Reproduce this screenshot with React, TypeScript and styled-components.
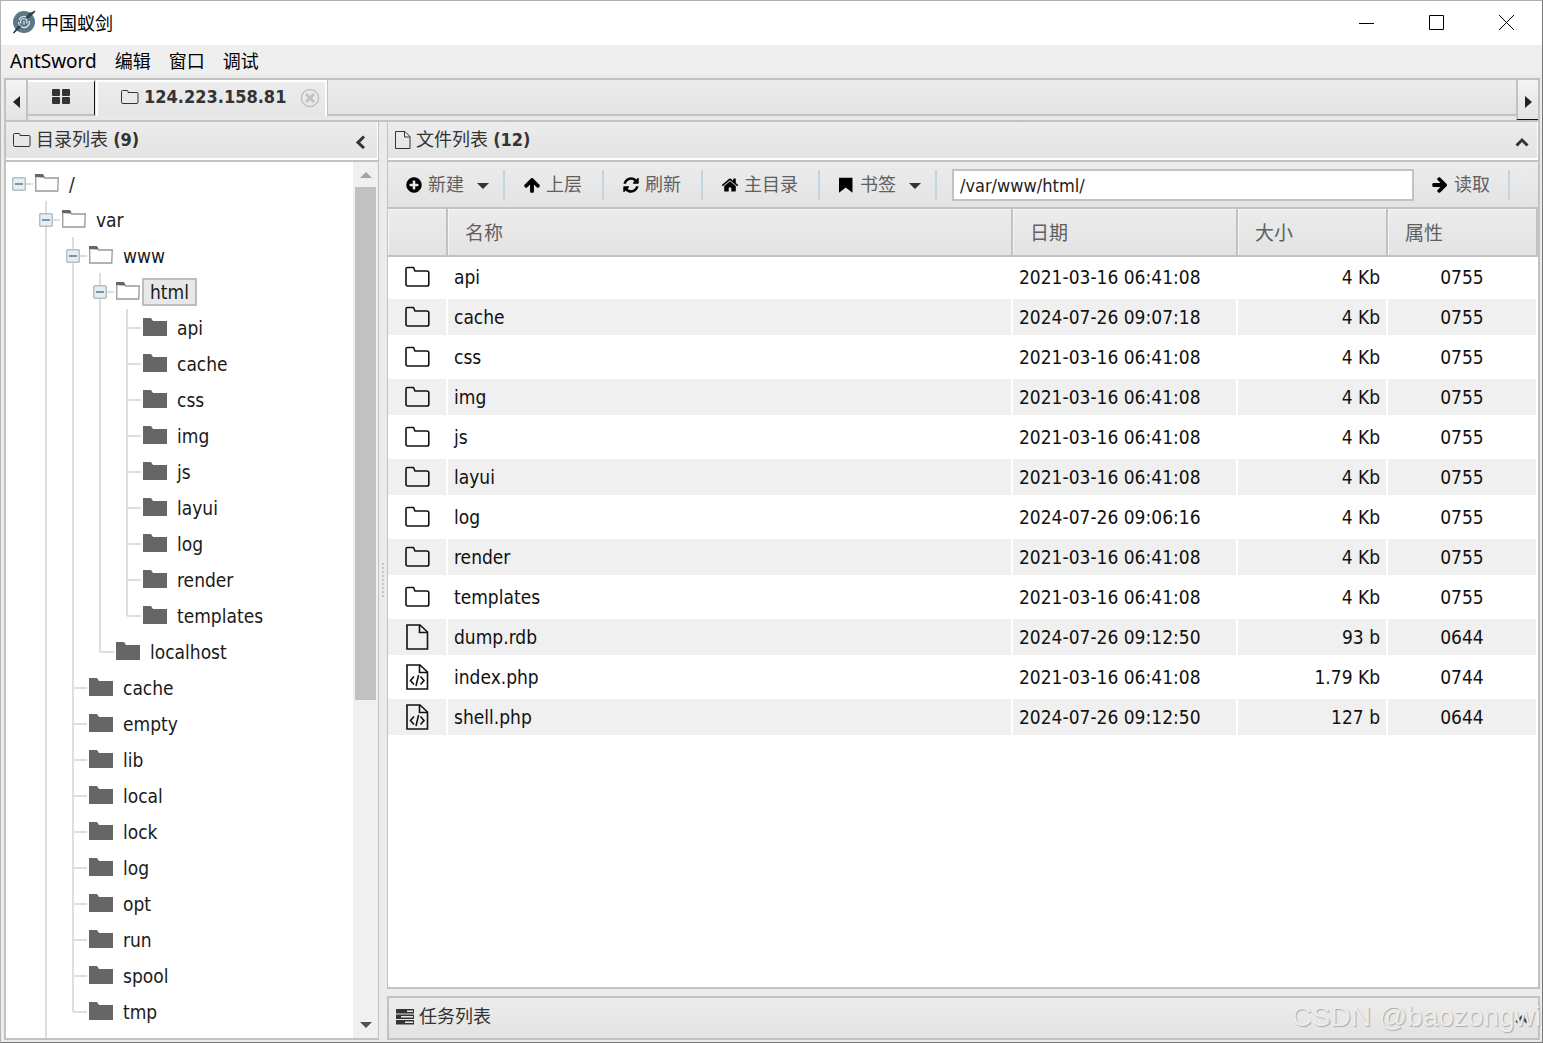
import React from "react";
import styled, { createGlobalStyle, css } from "styled-components";

const LINE = "#c2c2c2";
const BAR = "linear-gradient(#ececec, #e3e3e3)";
const UI = '"DejaVu Sans Condensed", "DejaVu Sans", "Noto Sans CJK SC", sans-serif';
const SYSTEM = '"Noto Sans", "Noto Sans CJK SC", sans-serif';

const GlobalStyle = createGlobalStyle`
  * { box-sizing: border-box; }
  html, body { margin: 0; height: 100%; overflow: hidden; }
  #root { height: 100%; }
  body { background: #ebebeb; font-family: ${UI}; color: #222; }
  button { font: inherit; color: inherit; border: 0; padding: 0; background: none; }
  h1, h2 { margin: 0; font: inherit; }
  svg { display: block; flex: none; }
`;

const Window = styled.div`
  position: relative;
  display: flex;
  flex-direction: column;
  height: 100vh;
  border: 1px solid #777;
  border-top-color: #b0b0b0;
  border-left-color: #b4b4b4;
  background: #ebebeb;
`;

/* ---------- title bar and menu ---------- */

const TitleBar = styled.header`
  display: flex;
  align-items: center;
  height: 44px;
  flex: none;
  padding: 0 1px 2px 11px;
  background: #fff;
  color: #000;
  font: 18px/24px "Noto Sans CJK SC", sans-serif;
`;

const Title = styled.h1`
  flex: 1;
  margin-left: 5px;
`;

const CaptionButton = styled.button`
  display: grid;
  place-items: center;
  width: 70px;
  height: 42px;
`;

const MenuBar = styled.nav`
  display: flex;
  align-items: center;
  gap: 18px;
  flex: none;
  height: 33px;
  padding: 0 0 2px 9px;
  background: linear-gradient(#efefef 30px, #ebebeb 30px);
  color: #000;
  font: 18px/24px ${SYSTEM};
`;

const MenuButton = styled.button<{ $latin?: boolean }>`
  font-size: ${(p) => (p.$latin ? 19 : 18)}px;
`;

/* ---------- tab strip ---------- */

const Workspace = styled.main`
  display: flex;
  flex-direction: column;
  flex: 1;
  min-height: 0;
  padding: 0 2px 2px 3px;
`;

const TabStrip = styled.div`
  display: flex;
  flex: none;
  height: 44px;
  border: 2px solid ${LINE};
  background: #e8e8e8;
`;

const ScrollTab = styled.button<{ $side: "left" | "right" }>`
  display: grid;
  place-items: center;
  width: 22px;
  padding-top: 4px;
  background: linear-gradient(#f4f4f4, #e3e3e3);
  ${(p) =>
    p.$side === "left"
      ? css`border-right: 2px solid ${LINE};`
      : css`
          border-left: 2px solid ${LINE};
          border-bottom: 1px solid #111;
        `}
`;

const HomeTab = styled.button`
  display: grid;
  place-items: center;
  width: 67px;
  height: 36px;
  padding-bottom: 2px;
  background: ${BAR};
  border-top: 2px solid #fff;
  border-right: 1px solid #111;
  border-bottom: 2px solid ${LINE};
`;

const ActiveTab = styled.div`
  display: flex;
  align-items: center;
  width: 231px;
  height: 36px;
  margin-left: 1px;
  padding: 0 0 2px 23px;
  background: linear-gradient(#ececec, #e6e6e6);
  border: 2px solid #fff;
  border-bottom: 0;
  font-size: 18px;
  line-height: 24px;
  font-weight: bold;
  color: #333;
`;

const TabLabel = styled.button`
  display: flex;
  align-items: center;
  gap: 5px;
  flex: 1;
  padding-bottom: 2px;
`;

const TabClose = styled.button`
  margin-right: 5px;
`;

const TabFiller = styled.div`
  flex: 1;
  height: 36px;
  background: ${BAR};
  border-left: 1px solid ${LINE};
  border-bottom: 2px solid ${LINE};
`;

/* ---------- panels ---------- */

const Columns = styled.div`
  display: flex;
  flex: 1;
  min-height: 0;
`;

const Panel = styled.section`
  display: flex;
  flex-direction: column;
  min-height: 0;
`;

const TreePanel = styled(Panel)`
  flex: none;
  width: 375px;
  border: solid ${LINE};
  border-width: 0 1px 2px 2px;
  background: #fff;
`;

const RightColumn = styled.div`
  display: flex;
  flex-direction: column;
  flex: 1;
  min-width: 0;
`;

const FilePanel = styled(Panel)`
  flex: 1;
  border: solid ${LINE};
  border-width: 0 2px 2px 1px;
  background: #fff;
`;

const TaskPanel = styled(Panel)`
  flex: none;
  margin-top: 7px;
  border: 2px solid ${LINE};
`;

const PanelHeader = styled.div<{ $plain?: boolean }>`
  display: flex;
  align-items: center;
  gap: 5px;
  flex: none;
  height: 40px;
  padding: 0 9px 2px 7px;
  background: ${BAR};
  font-size: 18px;
  line-height: 24px;
  color: #333;
  ${(p) =>
    !p.$plain &&
    css`
      border-bottom: 2px solid ${LINE};
      box-shadow: inset 0 -2px #fff, inset -1px 0 #fff;
    `}
`;

const PanelTitle = styled.h2`
  flex: 1;
`;

const FoldButton = styled.button`
  padding-top: 4px;
`;

const Splitter = styled.div`
  display: grid;
  place-items: center;
  flex: none;
  width: 8px;
`;

const Grip = styled.div`
  width: 2px;
  height: 36px;
  background: repeating-linear-gradient(#c6c6c6 0 2px, transparent 2px 4px);
`;

/* ---------- directory tree ---------- */

const TreeArea = styled.div`
  display: flex;
  flex: 1;
  min-height: 0;
`;

const Tree = styled.div`
  flex: 1;
  padding-top: 3px;
  overflow: hidden;
`;

const TreeRow = styled.div`
  display: flex;
  align-items: center;
  height: 36px;
`;

const rule = "linear-gradient(#dedede, #dedede)";

type Rail = "none" | "through" | "end" | "branch";

const RailCell = styled.span<{ $rail: Rail; $stub?: boolean }>`
  display: flex;
  align-items: center;
  flex: none;
  width: 27px;
  height: 36px;
  padding: 1px 0 0 6px;
  background-repeat: no-repeat;
  background-image: ${rule}, ${rule};
  background-position: 12px 0, 13px 18px;
  background-size: ${(p) => (p.$rail === "none" ? "0 0" : p.$rail === "end" ? "2px 19px" : "2px 36px")},
    ${(p) => (p.$stub ? "14px 2px" : "0 0")};
`;

const FolderCell = styled.span`
  flex: none;
  width: 28px;
  padding-left: 2px;
`;

const NodeLabel = styled.button<{ $selected?: boolean }>`
  height: 28px;
  margin-top: 2px;
  padding: 0 6px;
  border: 2px solid ${(p) => (p.$selected ? "#bdbdbd" : "transparent")};
  background: ${(p) => (p.$selected ? "#e8e8e8" : "transparent")};
  font-size: 19px;
  line-height: 24px;
  color: #1a1a1a;
`;

const ScrollBar = styled.div`
  display: flex;
  flex-direction: column;
  align-items: center;
  flex: none;
  width: 25px;
  padding: 10px 0;
  background: #f0f0f0;
`;

const Track = styled.div`
  flex: 1;
  width: 21px;
  margin: 9px 0 24px;
`;

const Thumb = styled.div`
  height: 63.3%;
  background: #c1c1c1;
`;

/* ---------- toolbar ---------- */

const Toolbar = styled.div`
  display: flex;
  align-items: center;
  flex: none;
  height: 47px;
  padding-right: 28px;
  background: ${BAR};
  border-bottom: 2px solid ${LINE};
  font-size: 18px;
  line-height: 24px;
  color: #606060;
`;

const toolPadding = {
  plain: "0 20px 0 18px",
  menu: "0 14px 0 17px",
  submit: "0 18px 0 17px",
};

const ToolButton = styled.button<{ $kind?: keyof typeof toolPadding }>`
  display: flex;
  align-items: center;
  gap: 5px;
  flex: none;
  padding: ${(p) => toolPadding[p.$kind ?? "plain"]};
`;

const ToolCaret = styled.span`
  margin: 2px 0 0 8px;
`;

const Divider = styled.span`
  flex: none;
  width: 2px;
  height: 30px;
  background: #c3d5de;
`;

const PathInput = styled.input`
  flex: 1;
  min-width: 0;
  height: 32px;
  margin-left: 15px;
  padding: 2px 6px 0;
  border: 2px solid ${LINE};
  background: #fff;
  color: #222;
  font: 18px/24px ${UI};
`;

/* ---------- file table ---------- */

const FileTable = styled.table`
  width: 100%;
  table-layout: fixed;
  border-collapse: separate;
  border-spacing: 0;
`;

const Col = styled.col<{ $w?: number }>`
  width: ${(p) => (p.$w ? `${p.$w}px` : "auto")};
`;

const HeadCell = styled.th`
  height: 48px;
  padding: 2px 0 0 17px;
  border: solid ${LINE};
  border-width: 0 2px 2px 0;
  background: ${BAR};
  box-shadow: inset 1px 1px #f6f6f6;
  text-align: left;
  font-size: 19px;
  line-height: 24px;
  font-weight: normal;
  color: #606060;
`;

const BodyRow = styled.tr`
  &:nth-child(even) { background: #f0f0f0; }
`;

const Cell = styled.td<{ $align?: "left" | "right" | "center" }>`
  height: 40px;
  padding: 0 6px;
  border: solid #fff;
  border-width: 2px 2px 2px 0;
  text-align: ${(p) => p.$align ?? "left"};
  font-size: 19px;
  line-height: 24px;
  color: #111;
`;

const IconCell = styled(Cell)`
  svg { margin: 0 auto; }
`;

const Watermark = styled.div`
  position: absolute;
  right: 1px;
  bottom: 8px;
  font: 28px/34px "Liberation Sans", sans-serif;
  color: #ececec;
  text-shadow: 1px 1px 1px #aaa;
  pointer-events: none;
`;

/* ---------- icons ---------- */

const glyphs = {
  plus: "M1344 960v-128q0-26-19-45t-45-19h-256v-256q0-26-19-45t-45-19h-128q-26 0-45 19t-19 45v256h-256q-26 0-45 19t-19 45v128q0 26 19 45t45 19h256v256q0 26 19 45t45 19h128q26 0 45-19t19-45v-256h256q26 0 45-19t19-45zm320-64q0 209-103 385.5t-279.5 279.5-385.5 103-385.5-103-279.5-279.5-103-385.5 103-385.5 279.5-279.5 385.5-103 385.5 103 279.5 279.5 103 385.5z",
  up: "M1675 971q0 51-37 90l-75 75q-38 38-91 38-54 0-90-38l-294-293v704q0 52-37.5 84.5t-90.5 32.5h-128q-53 0-90.5-32.5t-37.5-84.5v-704l-294 293q-36 38-90 38t-90-38l-75-75q-38-38-38-90 0-53 38-91l651-651q35-37 90-37 54 0 91 37l651 651q37 39 37 91z",
  refresh:
    "M1639 1056q0 5-1 7-64 268-268 434.5t-478 166.5q-146 0-282.5-55t-243.5-157l-129 129q-19 19-45 19t-45-19-19-45v-448q0-26 19-45t45-19h448q26 0 45 19t19 45-19 45l-137 137q71 66 161 102t187 36q134 0 250-65t186-179q11-17 53-117 8-23 30-23h192q13 0 22.5 9.5t9.5 22.5zm25-800v448q0 26-19 45t-45 19h-448q-26 0-45-19t-19-45 19-45l138-138q-148-137-349-137-134 0-250 65t-186 179q-11 17-53 117-8 23-30 23h-199q-13 0-22.5-9.5t-9.5-22.5v-7q65-268 270-434.5t480-166.5q146 0 284 55.5t245 156.5l130-129q19-19 45-19t45 19 19 45z",
  home: "M1472 992v480q0 26-19 45t-45 19h-384v-384h-256v384h-384q-26 0-45-19t-19-45v-480q0-1 .5-3t.5-3l575-474 575 474q1 2 1 6zm223-69l-62 74q-8 9-21 11h-3q-13 0-21-7l-692-577-692 577q-12 8-24 7-13-2-21-11l-62-74q-8-10-7-23.5t11-21.5l719-599q32-26 76-26t76 26l244 204v-195q0-14 9-23t23-9h192q14 0 23 9t9 23v408l219 182q10 8 11 21.5t-7 23.5z",
  bookmark: "M200 170h1340v1500l-670-520-670 520z",
};

const Glyph = ({ name, turn = 0 }: { name: keyof typeof glyphs; turn?: number }) => (
  <svg width="18" height="18" viewBox="0 0 1792 1792" fill="#000" aria-hidden="true">
    <path d={glyphs[name]} transform={`rotate(${turn} 896 896)`} />
  </svg>
);

const Logo = () => (
  <svg width="24" height="24" viewBox="0 0 24 24" aria-hidden="true">
    <circle cx="12" cy="12" r="11" fill="#5b7886" />
    <g fill="none" stroke="#e9eff1" strokeWidth="1.1">
      <path d="M6.500 12a5.600 5.600 0 0 0 5.500 5.600 5.600 5.600 0 0 0 5.400-6.600" />
      <path d="M9 13.500a3.200 3.200 0 0 1 3-5 3.300 3.300 0 0 1 2.600 5M12 10.800v3.700" />
      <path d="M7 9.500a5.600 5.600 0 0 1 7-2.800" />
    </g>
    <path d="M23 1 16 8M8 16l-6.500 7" stroke="#24343d" strokeWidth="1.500" />
    <path d="M23 1l-6 2-3.500 4.500 2.500.5 3-2.500zM1.500 23l3-5.500 3.500-2 1 1.500-3 3z" fill="#33454f" />
  </svg>
);

const Triangle = ({ to, color = "#222" }: { to: "left" | "right" | "up" | "down"; color?: string }) => {
  const side = to === "left" || to === "right";
  const points = { left: "7,0 7,12 0,6", right: "0,0 0,12 7,6", up: "0,6 12,6 6,0", down: "0,0 12,0 6,6" }[to];
  return (
    <svg width={side ? 7 : 12} height={side ? 12 : 6} fill={color} aria-hidden="true">
      <polygon points={points} />
    </svg>
  );
};

const Chevron = ({ to }: { to: "left" | "up" }) => (
  <svg width="14" height="14" viewBox="0 0 14 14" fill="none" stroke="#333" strokeWidth="3" aria-hidden="true">
    <path d={to === "left" ? "M9 1.500 3 7.500l6 5.500" : "M1.500 10.500 7 5l5.500 5.500"} />
  </svg>
);

const SmallFolder = () => (
  <svg width="18" height="16" viewBox="0 0 18 16" fill="none" stroke="#333" aria-hidden="true">
    <path d="M.5 12.500v-10q0-1 1-1h4.500q1 0 1 1v1h9q1 0 1 1v8.500q0 1.500-1 1.500h-14q-1.500 0-1.500-1.500z" />
  </svg>
);

const SmallFile = () => (
  <svg width="16" height="18" viewBox="0 0 16 18" fill="none" stroke="#333" aria-hidden="true">
    <path d="M.5.5h9.500l5 5v12h-14.500zM9.500.5v5.500h5.500" />
  </svg>
);

const Tasks = () => (
  <svg width="18" height="16" viewBox="0 0 18 16" aria-hidden="true">
    {[11, 5, 9].map((x, i) => (
      <g key={i}>
        <rect x="0" y={i * 5.500} width="18" height="4.500" rx=".5" fill="#333" />
        <rect x={x} y={i * 5.500 + 1.500} width={17 - x} height="1.500" fill="#e8e8e8" />
      </g>
    ))}
  </svg>
);

const Grid4 = () => (
  <svg width="18" height="16" viewBox="0 0 18 16" fill="#333" aria-hidden="true">
    {[0, 10].map((x) => [0, 8].map((y) => <rect key={`${x}${y}`} x={x} y={y} width="8" height="7" rx="1" />))}
  </svg>
);

const CloseCircle = () => (
  <svg width="20" height="20" viewBox="0 0 20 20" fill="none" stroke="#c2c2c2" aria-hidden="true">
    <circle cx="10" cy="10" r="8.600" strokeWidth="1.500" />
    <path d="M6 6l8 8M14 6l-8 8" strokeWidth="3" />
  </svg>
);

const Minus = () => (
  <svg width="14" height="14" viewBox="0 0 14 14" aria-hidden="true">
    <rect x=".75" y=".75" width="12.500" height="12.500" rx="1" fill="#e6eef2" stroke="#b3bfc6" strokeWidth="1.500" />
    <path d="M3 7h8" stroke="#55788c" strokeWidth="1.500" />
  </svg>
);

const TreeFolder = ({ open }: { open?: boolean }) => (
  <svg width="24" height="18" viewBox="0 0 24 18" aria-hidden="true">
    {open ? (
      <>
        <path d="M0 4V0h8l2 3.500z" fill="#666" />
        <path d="M.75 3v14h22L23.250 4H9" fill="#fff" stroke="#999" strokeWidth="1.300" />
      </>
    ) : (
      <path d="M0 0h8l2 3h14v15H0z" fill="#666" />
    )}
  </svg>
);

const RowIcon = ({ kind }: { kind: "dir" | "file" | "code" }) =>
  kind === "dir" ? (
    <svg width="26" height="22" viewBox="0 0 26 22" fill="none" stroke="#111" strokeWidth="1.600" aria-hidden="true">
      <path d="M2 18V3q0-1.500 1.500-1.500h6l1.500 3.500h12q1.800 0 1.800 1.800v11.400q0 1.800-1.800 1.800H3.800q-1.800 0-1.800-2z" />
    </svg>
  ) : (
    <svg width="24" height="26" viewBox="0 0 24 26" fill="none" stroke="#111" strokeWidth="1.600" aria-hidden="true">
      <path d="M2 1h13l7.500 7v17h-20.500zM14.500 1v7.500h8" />
      {kind === "code" && <path d="M9 12.500 5.500 16.500l3.500 4M15.500 12.500l3.500 4-3.500 4M13.600 11l-2.600 11" />}
    </svg>
  );

/* ---------- data ---------- */

type Node = { name: string; children?: Node[]; more?: boolean };

const leaf = (name: string): Node => ({ name });

const root: Node = {
  name: "/",
  children: [
    {
      name: "var",
      more: true,
      children: [
        {
          name: "www",
          children: [
            {
              name: "html",
              children: ["api", "cache", "css", "img", "js", "layui", "log", "render", "templates"].map(leaf),
            },
            leaf("localhost"),
          ],
        },
        ...["cache", "empty", "lib", "local", "lock", "log", "opt", "run", "spool", "tmp"].map(leaf),
      ],
    },
  ],
};

const files: [("dir" | "file" | "code"), string, string, string, string][] = [
  ["dir", "api", "2021-03-16 06:41:08", "4 Kb", "0755"],
  ["dir", "cache", "2024-07-26 09:07:18", "4 Kb", "0755"],
  ["dir", "css", "2021-03-16 06:41:08", "4 Kb", "0755"],
  ["dir", "img", "2021-03-16 06:41:08", "4 Kb", "0755"],
  ["dir", "js", "2021-03-16 06:41:08", "4 Kb", "0755"],
  ["dir", "layui", "2021-03-16 06:41:08", "4 Kb", "0755"],
  ["dir", "log", "2024-07-26 09:06:16", "4 Kb", "0755"],
  ["dir", "render", "2021-03-16 06:41:08", "4 Kb", "0755"],
  ["dir", "templates", "2021-03-16 06:41:08", "4 Kb", "0755"],
  ["file", "dump.rdb", "2024-07-26 09:12:50", "93 b", "0644"],
  ["code", "index.php", "2021-03-16 06:41:08", "1.79 Kb", "0744"],
  ["code", "shell.php", "2024-07-26 09:12:50", "127 b", "0644"],
];

const TreeNode = ({ node, rails = [], own = "none" }: { node: Node; rails?: Rail[]; own?: Rail }) => {
  const open = !!node.children;
  const kids = node.children ?? [];
  const passing: Rail[] = [...rails, own === "end" || own === "none" ? "none" : "through"];
  return (
    <>
      <TreeRow>
        {rails.map((r, i) => (
          <RailCell key={i} $rail={r} />
        ))}
        <RailCell $rail={own} $stub>
          {open && <Minus />}
        </RailCell>
        <FolderCell>
          <TreeFolder open={open} />
        </FolderCell>
        <NodeLabel $selected={node.name === "html"}>{node.name}</NodeLabel>
      </TreeRow>
      {kids.map((kid, i) => (
        <TreeNode
          key={kid.name}
          node={kid}
          rails={passing}
          own={i === kids.length - 1 && !kid.more ? "end" : "branch"}
        />
      ))}
    </>
  );
};

export default function App() {
  return (
    <>
      <GlobalStyle />
      <Window>
        <TitleBar>
          <Logo />
          <Title>中国蚁剑</Title>
          <CaptionButton aria-label="最小化">
            <svg width="15" height="15" stroke="#000"><path d="M0 8.500h15" /></svg>
          </CaptionButton>
          <CaptionButton aria-label="最大化">
            <svg width="15" height="15" stroke="#000" fill="none"><path d="M.5.5h14v14H.5z" /></svg>
          </CaptionButton>
          <CaptionButton aria-label="关闭">
            <svg width="15" height="15" stroke="#000"><path d="M0 0l15 15M15 0L0 15" /></svg>
          </CaptionButton>
        </TitleBar>
        <MenuBar>
          <MenuButton $latin>AntSword</MenuButton>
          {["编辑", "窗口", "调试"].map((m) => (
            <MenuButton key={m}>{m}</MenuButton>
          ))}
        </MenuBar>

        <Workspace>
          <TabStrip>
            <ScrollTab $side="left" aria-label="左"><Triangle to="left" /></ScrollTab>
            <HomeTab aria-label="主页"><Grid4 /></HomeTab>
            <ActiveTab>
              <TabLabel><SmallFolder />124.223.158.81</TabLabel>
              <TabClose aria-label="关闭标签"><CloseCircle /></TabClose>
            </ActiveTab>
            <TabFiller />
            <ScrollTab $side="right" aria-label="右"><Triangle to="right" /></ScrollTab>
          </TabStrip>

          <Columns>
            <TreePanel>
              <PanelHeader>
                <SmallFolder />
                <PanelTitle>目录列表 <b>(9)</b></PanelTitle>
                <FoldButton aria-label="折叠"><Chevron to="left" /></FoldButton>
              </PanelHeader>
              <TreeArea>
                <Tree>
                  <TreeNode node={root} />
                  <TreeRow>
                    <RailCell $rail="none" />
                    <RailCell $rail="through" />
                  </TreeRow>
                </Tree>
                <ScrollBar>
                  <Triangle to="up" color="#a3a3a3" />
                  <Track><Thumb /></Track>
                  <Triangle to="down" color="#505050" />
                </ScrollBar>
              </TreeArea>
            </TreePanel>

            <Splitter><Grip /></Splitter>

            <RightColumn>
              <FilePanel>
                <PanelHeader>
                  <SmallFile />
                  <PanelTitle>文件列表 <b>(12)</b></PanelTitle>
                  <FoldButton aria-label="折叠"><Chevron to="up" /></FoldButton>
                </PanelHeader>
                <Toolbar>
                  <ToolButton $kind="menu">
                    <Glyph name="plus" />新建<ToolCaret><Triangle to="down" color="#333" /></ToolCaret>
                  </ToolButton>
                  <Divider />
                  <ToolButton><Glyph name="up" />上层</ToolButton>
                  <Divider />
                  <ToolButton><Glyph name="refresh" />刷新</ToolButton>
                  <Divider />
                  <ToolButton><Glyph name="home" />主目录</ToolButton>
                  <Divider />
                  <ToolButton $kind="menu">
                    <Glyph name="bookmark" />书签<ToolCaret><Triangle to="down" color="#333" /></ToolCaret>
                  </ToolButton>
                  <Divider />
                  <PathInput aria-label="路径" defaultValue="/var/www/html/" />
                  <ToolButton $kind="submit"><Glyph name="up" turn={90} />读取</ToolButton>
                  <Divider />
                </Toolbar>
                <FileTable>
                  <colgroup>
                    <Col $w={60} />
                    <Col />
                    <Col $w={225} />
                    <Col $w={150} />
                    <Col $w={150} />
                  </colgroup>
                  <thead>
                    <tr>
                      {["", "名称", "日期", "大小", "属性"].map((h) => (
                        <HeadCell key={h}>{h}</HeadCell>
                      ))}
                    </tr>
                  </thead>
                  <tbody>
                    {files.map(([kind, name, date, size, mode]) => (
                      <BodyRow key={name}>
                        <IconCell><RowIcon kind={kind} /></IconCell>
                        <Cell>{name}</Cell>
                        <Cell>{date}</Cell>
                        <Cell $align="right">{size}</Cell>
                        <Cell $align="center">{mode}</Cell>
                      </BodyRow>
                    ))}
                  </tbody>
                </FileTable>
              </FilePanel>
              <TaskPanel>
                <PanelHeader $plain>
                  <Tasks />
                  <PanelTitle>任务列表</PanelTitle>
                  <FoldButton aria-label="展开"><Chevron to="up" /></FoldButton>
                </PanelHeader>
              </TaskPanel>
            </RightColumn>
          </Columns>
        </Workspace>
        <Watermark>CSDN @baozongwi</Watermark>
      </Window>
    </>
  );
}
